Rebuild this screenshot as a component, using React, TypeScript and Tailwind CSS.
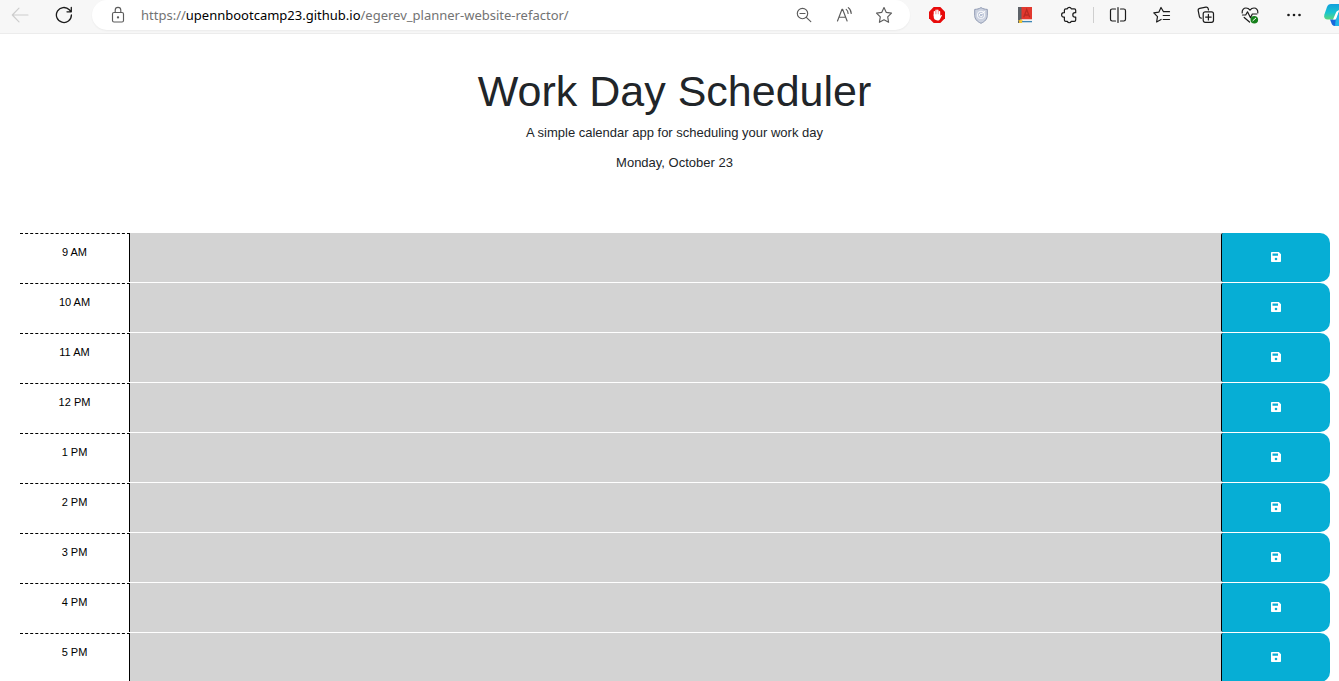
import type { ReactNode } from "react";

const hours = ["9 AM", "10 AM", "11 AM", "12 PM", "1 PM", "2 PM", "3 PM", "4 PM", "5 PM"];

function Line({ children, className = "" }: { children: ReactNode; className?: string }) {
  return (
    <svg
      width="18"
      height="18"
      viewBox="0 0 18 18"
      fill="none"
      stroke="currentColor"
      strokeWidth="1.15"
      strokeLinecap="round"
      strokeLinejoin="round"
      aria-hidden="true"
      className={className}
    >
      {children}
    </svg>
  );
}

function ToolButton({ label, children }: { label: string; children: ReactNode }) {
  return (
    <button type="button" aria-label={label} className="flex h-full w-11 shrink-0 items-center justify-center">
      {children}
    </button>
  );
}

function FieldButton({ label, children }: { label: string; children: ReactNode }) {
  return (
    <button type="button" aria-label={label} className="flex h-full w-10 shrink-0 items-center justify-center text-[#5c5c5c]">
      {children}
    </button>
  );
}

function BrowserBar() {
  return (
    <div className="flex h-[34px] items-start overflow-hidden border-b border-[#ececec] bg-[#f7f7f7] text-[#1b1b1b]">
      <div className="flex h-[30px] min-w-0 flex-1 items-center">
        <button type="button" aria-label="Back" className="flex h-full w-10 shrink-0 items-center justify-center text-[#cdcdcd]">
          <Line>
            <path d="M17 9H1.5M8 2.2 1.3 9 8 15.8" />
          </Line>
        </button>
        <button type="button" aria-label="Refresh" className="mr-1 flex h-full w-12 shrink-0 items-center justify-center">
          <Line>
            <path strokeWidth="1.3" d="M16.4 9A7.5 7.5 0 1 1 14.3 3.8L16.2 5.7M16.3 1.5V5.8H12" />
          </Line>
        </button>
        <div className="flex h-full min-w-0 flex-1 items-center rounded-full bg-white pr-1.5 pl-[17px] shadow-xs">
          <Line className="shrink-0 text-[#5c5c5c]">
            <rect x="3.5" y="6.5" width="11" height="9.5" rx="1.5" />
            <path d="M6.2 6.3V4.2a2.8 2.8 0 0 1 5.6 0v2.1" />
            <circle cx="9" cy="11.3" r=".6" fill="currentColor" />
          </Line>
          <p className="ml-3.5 min-w-0 flex-1 truncate font-['Noto_Sans',sans-serif] text-[13px] leading-5 text-[#737373]">
            https://<span className="text-black">upennbootcamp23.github.io</span>/egerev_planner-website-refactor/
          </p>
          <FieldButton label="Zoom">
            <Line>
              <circle cx="7.5" cy="7.5" r="5.2" />
              <path d="M5 7.5h5M11.3 11.3l4.5 4.4" />
            </Line>
          </FieldButton>
          <FieldButton label="Read aloud">
            <Line>
              <path d="M2.5 15 7 3.3h.6L12.100 15M4 11.200h6.600M11.200 3.400c1.300 1 1.900 2.400 1.900 4M13.300 1.600c1.900 1.500 2.900 3.500 2.900 5.800" />
            </Line>
          </FieldButton>
          <FieldButton label="Add to favorites">
            <Line>
              <path d="m9 1.5 2.3 4.9 5.2.7-3.8 3.8.9 5.4L9 13.8l-4.6 2.5.9-5.4L1.5 7.1l5.2-.7z" />
            </Line>
          </FieldButton>
        </div>
      </div>
      <div className="ml-[5px] flex h-[30px] shrink-0 items-center">
        <ToolButton label="Ad blocker">
          <svg width="16" height="16" viewBox="0 0 16 16" aria-hidden="true">
            <path fill="#e80b0b" d="M4.7 0h6.6L16 4.7v6.6L11.3 16H4.7L0 11.3V4.7z" />
            <path fill="none" stroke="#fff" strokeWidth="1.4" strokeLinecap="round" d="M5.400 8.500V4.600M7.100 8V3.300M8.800 8V3.300M10.500 8.500V4.600" />
            <path fill="#fff" d="M4.700 7.300h6.500v1.600l.6-.7c.6-.6 1.400-.2 1 .6l-1.700 3.100c-.6 1-1.300 1.500-2.600 1.500-2.400 0-3.800-1.400-3.800-3.600z" />
          </svg>
        </ToolButton>
        <ToolButton label="Privacy shield">
          <svg width="14" height="17" viewBox="0 0 14 17" aria-hidden="true">
            <path d="M7 .6c2 1.300 4 1.700 6.300 1.800v6c0 3.700-2.500 6.200-6.300 7.900C3.200 14.600.7 12.100.7 8.400v-6C3 2.300 5 1.900 7 .6z" fill="#cbd1df" stroke="#919bb3" strokeWidth="1" />
            <circle cx="7" cy="7.900" r="3.500" fill="#b9c2d6" stroke="#f1f3f8" strokeWidth="1.200" />
            <path d="M8.300 6.900A1.700 1.700 0 1 0 8.700 8.300M8 6.500l3-2.200" stroke="#fff" strokeWidth="1" fill="none" />
          </svg>
        </ToolButton>
        <ToolButton label="Dictionary">
          <svg width="14" height="16" viewBox="0 0 14 16" aria-hidden="true">
            <path fill="#5d6268" d="M0 0h4v16H0z" />
            <path fill="#e2382e" d="M3.500 0H14v12.500H3.500z" />
            <path stroke="#b92a23" strokeWidth="1.300" fill="none" d="m5.700 10.300 3-7.800 3 7.800M6.800 8h3.800" />
            <path fill="#f0f0f0" d="M3 12.500h11V14H3z" />
            <path fill="#3c86b4" d="M3 14h11v1.300H3z" />
            <path fill="#f2c230" d="m2.500 12 1 1.300 1.600.2-1.200 1.100.3 1.400H.9l.3-1.400L0 13.500l1.600-.2z" />
          </svg>
        </ToolButton>
        <ToolButton label="Extensions">
          <Line>
            <path
              strokeWidth="1.200"
              d="M5.800 2.800H7.300a2.100 2.100 0 0 1 4 0h3a1.400 1.400 0 0 1 1.400 1.400v2.500h-.7a2.200 2.200 0 0 0 0 4.400h.7v2.800a1.400 1.400 0 0 1-1.400 1.400h-3a2.100 2.100 0 0 1-4 0H5.800a1.400 1.400 0 0 1-1.400-1.400v-2.800H3.800a2.200 2.200 0 0 1 0-4.400h.6V4.200a1.400 1.400 0 0 1 1.400-1.400z"
            />
          </Line>
        </ToolButton>
        <div className="flex w-[5px] justify-center">
          <div className="h-4 w-px bg-[#cfcfcf]" />
        </div>
        <ToolButton label="Split screen">
          <Line>
            <path strokeWidth="1.200" d="M6.500 3H3.200C2.200 3 1.500 3.700 1.500 4.700v8.600c0 1 .7 1.700 1.700 1.700h3.300M11.500 3h3.300c1 0 1.700.7 1.700 1.700v8.600c0 1-.7 1.700-1.700 1.700h-3.300M9 1.500v15" />
          </Line>
        </ToolButton>
        <ToolButton label="Favorites">
          <Line>
            <path strokeWidth="1.200" d="M10.500 5.700 8 1.500 5.800 6.200l-5 .7 3.700 3.700-.9 5.400 4.500-2.500M10.500 5.700h6M10.200 9.500h6.300M10.200 13.500h6.300" />
          </Line>
        </ToolButton>
        <ToolButton label="Collections">
          <Line>
            <path strokeWidth="1.200" d="M4.300 12.200a2 2 0 0 1-1.900-1.600L1.200 4.700a2 2 0 0 1 1.500-2.300l6.200-1.300a2 2 0 0 1 2.300 1.500l.3 1.400" />
            <rect strokeWidth="1.200" x="6.200" y="5.800" width="10.300" height="10.500" rx="2" />
            <path strokeWidth="1.200" d="M11.400 8.300v5.600M8.600 11.100h5.600" />
          </Line>
        </ToolButton>
        <ToolButton label="Browser essentials">
          <Line>
            <path strokeWidth="1.200" d="M1.200 6.800C.8 3.800 2.700 2 5 2c1.700 0 3 .8 4 2.200C10 2.800 11.300 2 13 2c2.300 0 4.200 1.800 3.800 4.800M1.500 9h3.200L6.500 5.800l3 6L11.300 8h4.500M3.200 11.500 8.500 16" />
            <circle cx="13.300" cy="13.700" r="3.800" fill="#16801b" stroke="none" />
            <path stroke="#fff" strokeWidth="1" d="m11.900 14.700 2.800-2.500" />
          </Line>
        </ToolButton>
        <ToolButton label="Settings and more">
          <Line>
            <g fill="currentColor" stroke="none">
              <circle cx="3.500" cy="9" r="1.300" />
              <circle cx="9" cy="9" r="1.300" />
              <circle cx="14.500" cy="9" r="1.300" />
            </g>
          </Line>
        </ToolButton>
        <button type="button" aria-label="Copilot" className="flex h-full w-[23px] items-center overflow-hidden pl-2">
          <svg width="26" height="24" viewBox="0 0 26 24" className="shrink-0" aria-hidden="true">
            <defs>
              <linearGradient id="wave" x1="0" y1="0" x2="0" y2="1">
                <stop offset="0" stopColor="#129fdd" />
                <stop offset=".55" stopColor="#18c4cf" />
                <stop offset="1" stopColor="#5bd77c" />
              </linearGradient>
            </defs>
            <path fill="url(#wave)" d="M7 1h10l-6 15.500H3.500C.5 16.500-.3 14.300.4 11.500L3 4c.7-2 2-3 4-3z" />
            <path fill="#1768dc" d="M6 16.500h5.500L15 11v12h-4c-2.300 0-3.200-1.300-3.700-3.200z" />
            <path fill="#20b5e8" d="M12 14 15 8h6l-4 15h-6z" />
            <path fill="#fff" d="M9 16.500 12 9.500c.5-1.300 1.500-2 3-2L12.500 15c-.3.900-1 1.500-1.800 1.500z" />
          </svg>
        </button>
      </div>
    </div>
  );
}

function SaveIcon() {
  return (
    <svg width="10" height="10" viewBox="0 0 10 10" aria-hidden="true">
      <path
        fill="#fff"
        fillRule="evenodd"
        d="M.8 0h7L10 2.200V9.200a.8.8 0 0 1-.8.800H.8a.8.8 0 0 1-.8-.8V.8A.8.8 0 0 1 .8 0zM1.500 1.500v2.300H7V1.500zM5 5.700a1.300 1.300 0 1 0 0 2.600 1.300 1.300 0 0 0 0-2.600z"
      />
    </svg>
  );
}

function TimeBlock({ hour }: { hour: string }) {
  const id = `entry-${hour.replace(" ", "-").toLowerCase()}`;
  return (
    <div className="grid h-[50px] grid-cols-[110px_1fr_109px] pb-px">
      <label
        htmlFor={id}
        className="border-t border-r border-black pt-3 text-center text-[11px] leading-3 text-black [border-top-style:dashed]"
      >
        {hour}
      </label>
      <textarea id={id} className="block h-full w-full resize-none bg-[#d3d3d3] p-2 text-[11px] text-black outline-none" />
      <button
        type="button"
        aria-label={`Save ${hour}`}
        className="flex items-center justify-center rounded-l-xs rounded-r-[10px] border-l border-black bg-[#06aed5] pb-0.5"
      >
        <SaveIcon />
      </button>
    </div>
  );
}

export default function App() {
  return (
    <div className="h-screen overflow-hidden bg-white font-['Liberation_Sans',Arial,sans-serif] text-[#212529]">
      <BrowserBar />
      <header className="pt-8 pl-2.5 text-center">
        <h1 className="text-[43px] leading-[50px]">Work Day Scheduler</h1>
        <p className="mt-[7px] text-[13px] leading-5">A simple calendar app for scheduling your work day</p>
        <p className="mt-2.5 text-[13px] leading-5">Monday, October 23</p>
      </header>
      <main className="mt-[60px] pr-[9px] pl-5">
        {hours.map((hour) => (
          <TimeBlock key={hour} hour={hour} />
        ))}
      </main>
    </div>
  );
}
